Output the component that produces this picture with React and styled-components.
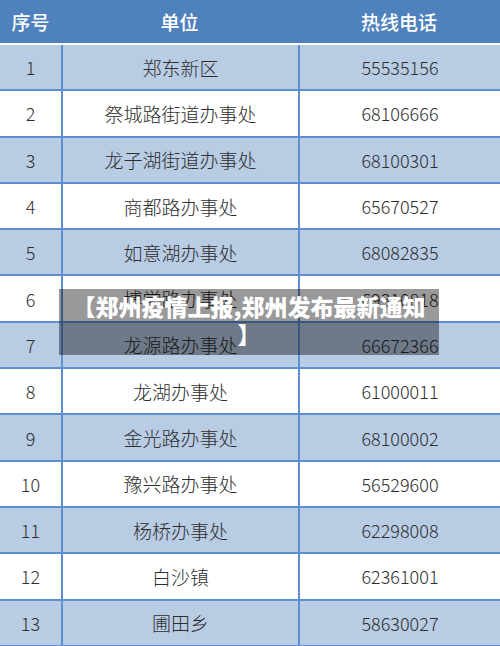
import styled, { createGlobalStyle } from 'styled-components'

const rows = [
  ['1', '郑东新区', '55535156'],
  ['2', '祭城路街道办事处', '68106666'],
  ['3', '龙子湖街道办事处', '68100301'],
  ['4', '商都路办事处', '65670527'],
  ['5', '如意湖办事处', '68082835'],
  ['6', '博学路办事处', '69310818'],
  ['7', '龙源路办事处', '66672366'],
  ['8', '龙湖办事处', '61000011'],
  ['9', '金光路办事处', '68100002'],
  ['10', '豫兴路办事处', '56529600'],
  ['11', '杨桥办事处', '62298008'],
  ['12', '白沙镇', '62361001'],
  ['13', '圃田乡', '58630027'],
]

export default function App() {
  return (
    <>
      <Global />
      <Page>
        <Table>
          <Head>
            <HeadCell>序号</HeadCell>
            <HeadCell>单位</HeadCell>
            <HeadCell>热线电话</HeadCell>
          </Head>
          {rows.map((r, i) => (
            <Row key={r[0]} $shade={i % 2 === 0}>
              <Cell>{r[0]}</Cell>
              <Cell $line $size={19}>{r[1]}</Cell>
              <Cell $line>{r[2]}</Cell>
            </Row>
          ))}
        </Table>
        <Caption>【郑州疫情上报,郑州发布最新通知】</Caption>
      </Page>
    </>
  )
}

const Global = createGlobalStyle`
  html, body { margin: 0; padding: 0; background: #fff; }
  body { width: 500px; height: 646px; overflow: hidden; }
`
const Page = styled.div`
  position: relative;
  width: 500px; height: 646px; overflow: hidden;
  font-family: "Noto Sans CJK SC", "Noto Sans", sans-serif;
`
const Table = styled.div`
  display: flex; flex-direction: column;
`
const Head = styled.div`
  display: grid; grid-template-columns: 61px 237px 1fr;
  height: 43px; background: #4f81bd;
  border-bottom: 2px solid #fff;
`
const HeadCell = styled.div`
  display: flex; align-items: center; justify-content: center;
  color: #fff; font-size: 19px; font-weight: 500;
  padding-bottom: 1px;
`
const Row = styled.div`
  display: grid; grid-template-columns: 61px 237px 1fr;
  height: 44.3px; flex-shrink: 0;
  background: ${p => p.$shade ? '#b8cce4' : '#fff'};
  border-bottom: 2px solid #5e8fd2;
`
const Cell = styled.div`
  display: flex; align-items: center; justify-content: center;
  color: #2e2e2e; font-size: ${p => p.$size || 18}px; font-weight: 300;
  border-left: ${p => p.$line ? '2px solid #5e8fd2' : 'none'};
`
const Caption = styled.div`
  position: absolute; left: 59px; top: 289px;
  width: 380px; box-sizing: border-box;
  padding: 3px 12px 7px;
  background: rgba(0, 0, 0, 0.4);
  color: #fff; font-size: 23px; font-weight: 900;
  line-height: 28px; text-align: center;
  line-break: anywhere;
`
